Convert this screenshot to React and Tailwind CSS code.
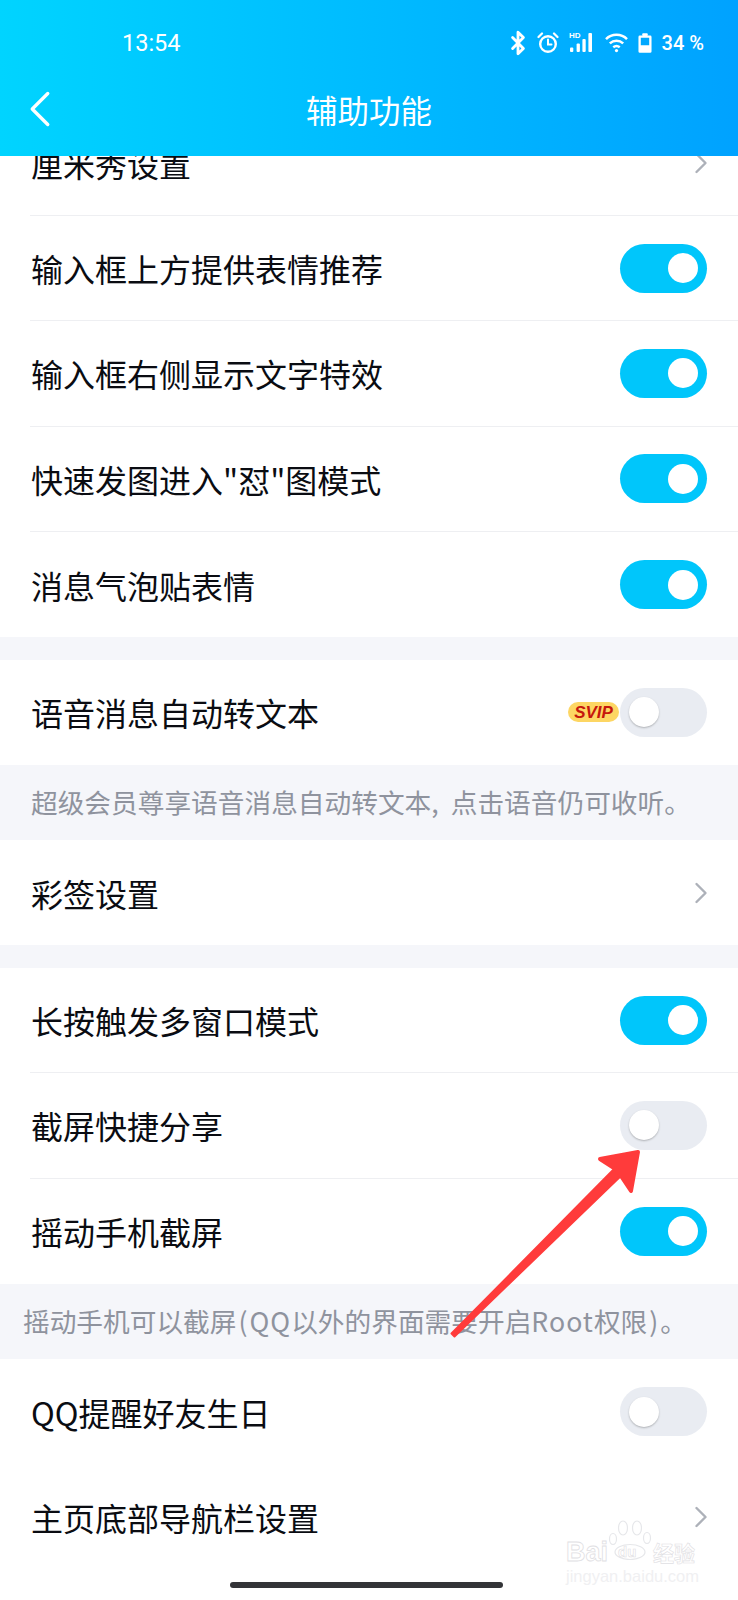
import { Bluetooth, ChevronLeft, ChevronRight } from "lucide-react";

const cjk = "font-['Noto_Sans_CJK_SC','Noto_Sans',sans-serif]";

function Toggle({ on }) {
  return (
    <div
      className={`flex h-[49px] w-[87px] items-center rounded-full px-[9px] ${
        on ? "justify-end bg-[#00c6fb]" : "justify-start bg-[#e9ecf2]"
      }`}
    >
      <div
        className={`h-[30px] w-[30px] rounded-full bg-white ${
          on ? "" : "shadow-[0_1px_2px_rgba(0,0,0,0.25)]"
        }`}
      />
    </div>
  );
}

function Row({ title, on, arrow, divider, svip }) {
  return (
    <div className={`ml-[31px] flex items-center justify-between pr-[31px] ${divider ? "h-[104.33px]" : "h-[105.33px]"}`}>
      <span className="text-[32px] leading-none text-[#0a0c12]">{title}</span>
      {arrow && <ChevronRight size={36} strokeWidth={1.6} className="mr-[-11.5px] text-[#adb1b9]" />}
      {on !== undefined && (
        <div className="flex items-center">
          {svip && (
            <span className="z-10 mr-[1px] flex h-[20px] w-[51px] items-center justify-center rounded-full bg-[#fdd663] text-[17px] font-bold italic leading-none text-[#c6170c] font-['Liberation_Sans',sans-serif]">
              SVIP
            </span>
          )}
          <Toggle on={on} />
        </div>
      )}
    </div>
  );
}

function Divider() {
  return <div className="ml-[30px] h-px bg-[#eeeff2]" />;
}

function Hint({ children, className = "" }) {
  return (
    <div className={`flex h-[75px] items-center whitespace-pre bg-[#f5f6fa] text-[26.7px] leading-none text-[#8f939e] ${className}`}>
      {children}
    </div>
  );
}

function StatusBar() {
  return (
    <div className="flex h-[64px] items-center justify-between pl-[122px] pr-[34px] pt-[21px] text-white">
      <span className="text-[23.5px] leading-[24px] font-['Roboto',sans-serif]">13:54</span>
      <div className="flex items-center">
        <Bluetooth size={26} strokeWidth={2.6} />
        {/* alarm */}
        <svg width="22" height="21" viewBox="0 0 22 21" className="ml-[6px]" fill="none" stroke="currentColor" strokeLinecap="round">
          <circle cx="11" cy="12" r="7.8" strokeWidth="2.4" />
          <path d="M11 7.5V12.5H14.5" strokeWidth="2" />
          <path d="M1.5 5L5 1.5M20.5 5L17 1.5" strokeWidth="2.2" />
        </svg>
        {/* HD signal */}
        <svg width="24" height="21" viewBox="0 0 24 21" className="ml-[10px]" fill="currentColor">
          <text x="0" y="6" fontSize="8" fontWeight="700" fontFamily="Liberation Sans">HD</text>
          <rect x="1" y="15.5" width="3.3" height="4.5" rx="1" />
          <rect x="7.6" y="11.5" width="3.3" height="8.5" rx="1" />
          <rect x="13.4" y="7" width="3.3" height="13" rx="1" />
          <rect x="19.4" y="1" width="3.6" height="19" rx="1" />
        </svg>
        {/* wifi */}
        <svg width="23" height="21" viewBox="0 0 24 22" className="ml-[12px]" fill="none" stroke="currentColor" strokeWidth="2.6">
          <path d="M1 7.5C7 1.5 17 1.5 23 7.5" />
          <path d="M5 12C9 8.3 15 8.3 19 12" />
          <path d="M8.6 16C10.6 14.4 13.4 14.4 15.4 16" />
          <circle cx="12" cy="19.5" r="1.7" fill="currentColor" stroke="none" />
        </svg>
        {/* battery */}
        <svg width="14" height="20" viewBox="0 0 15 21" className="ml-[10px]" fill="currentColor">
          <rect x="4.5" y="0" width="6" height="3" rx="1" />
          <path fillRule="evenodd" d="M2 2.5h11a1.5 1.5 0 0 1 1.5 1.5v15.5a1.5 1.5 0 0 1-1.5 1.5H2a1.5 1.5 0 0 1-1.5-1.5V4A1.5 1.5 0 0 1 2 2.5ZM3 5v8h9V5Z" />
        </svg>
        <span className="ml-[10px] text-[20px] font-medium leading-none font-['Roboto',sans-serif]">34 %</span>
      </div>
    </div>
  );
}

export default function App() {
  return (
    <div className={`relative h-[1600px] w-[738px] overflow-hidden bg-white ${cjk}`}>
      <header className="relative z-10 h-[156px] bg-gradient-to-r from-[#00d4ff] to-[#00a2ff]">
        <StatusBar />
        <div className="grid h-[92px] grid-cols-[1fr_auto_1fr] items-center text-white">
          <ChevronLeft size={62} strokeWidth={1.3} className="ml-[9px] mt-[-3px]" />
          <span className="text-[31.5px] leading-none">辅助功能</span>
        </div>
      </header>

      <div className="mt-[-45.33px]">
        <Row title="厘米秀设置" arrow divider />
        <Divider />
        <Row title="输入框上方提供表情推荐" on divider />
        <Divider />
        <Row title="输入框右侧显示文字特效" on divider />
        <Divider />
        <Row title="快速发图进入&quot;怼&quot;图模式" on divider />
        <Divider />
        <Row title="消息气泡贴表情" on />
        <div className="h-[22.5px] bg-[#f5f6fa]" />
        <Row title="语音消息自动转文本" on={false} svip />
        <Hint className="pl-[31px]">
          超级会员尊享语音消息自动转文本<span className="mr-[6px]">, </span>点击语音仍可收听。
        </Hint>
        <Row title="彩签设置" arrow />
        <div className="h-[22.5px] bg-[#f5f6fa]" />
        <Row title="长按触发多窗口模式" on divider />
        <Divider />
        <Row title="截屏快捷分享" on={false} divider />
        <Divider />
        <Row title="摇动手机截屏" on />
        <Hint className="pl-[23px]">
          摇动手机可以截屏<span className="mx-[2px]">(</span><span className="tracking-[1px]">QQ</span>以外的界面需要开启<span className="tracking-[1px]">Root</span>权限<span className="mx-[2px]">)</span>。
        </Hint>
        <Row title="QQ提醒好友生日" on={false} />
        <Row title="主页底部导航栏设置" arrow />
      </div>

      {/* annotation arrow drawn over the screenshot */}
      <svg className="absolute left-0 top-0" width="738" height="1600" fill="#ff3b3b" stroke="#ff3b3b" strokeWidth="2" strokeLinejoin="round">
        <path d="M451.5 1333.5L618.5 1164.5L625.5 1171.5L454.5 1336.5Z" />
        <path d="M638 1152L600 1159L617 1170L631 1191Z" strokeWidth="4" />
      </svg>

      {/* baidu watermark */}
      <div className="absolute left-[566px] top-[1520px] h-[64px] w-[134px]">
        <svg width="46" height="40" viewBox="0 0 46 40" className="absolute left-[42px] top-0" fill="none" stroke="#e6e7ea" strokeWidth="1.2">
          <ellipse cx="5" cy="19" rx="3.5" ry="5.5" />
          <ellipse cx="15" cy="8" rx="4.5" ry="7" />
          <ellipse cx="29" cy="8" rx="4.5" ry="7" />
          <ellipse cx="39" cy="18" rx="3.5" ry="5.5" />
          <ellipse cx="22" cy="32" rx="15" ry="7.5" />
        </svg>
        <div className="absolute left-0 top-[17px] flex items-center font-['Liberation_Sans',sans-serif]">
          <span className="w-[52px] text-[27px] font-bold leading-[30px] text-transparent [-webkit-text-stroke:0.8px_#dfe0e3]">Bai</span>
          <span className="w-[35px] text-[15px] font-bold leading-[30px] text-transparent [-webkit-text-stroke:0.6px_#dfe0e3]">du</span>
          <span className={`text-[21px] font-bold leading-[30px] text-transparent [-webkit-text-stroke:0.6px_#dfe0e3] ${cjk}`}>经验</span>
        </div>
        <div className="absolute bottom-0 left-0 text-[16.5px] leading-[16px] text-[#f0f0f2] font-['Liberation_Sans',sans-serif]">jingyan.baidu.com</div>
      </div>

      {/* home indicator */}
      <div className="absolute bottom-[12px] left-[230px] h-[6px] w-[273px] rounded-full bg-[#333438]" />
    </div>
  );
}
